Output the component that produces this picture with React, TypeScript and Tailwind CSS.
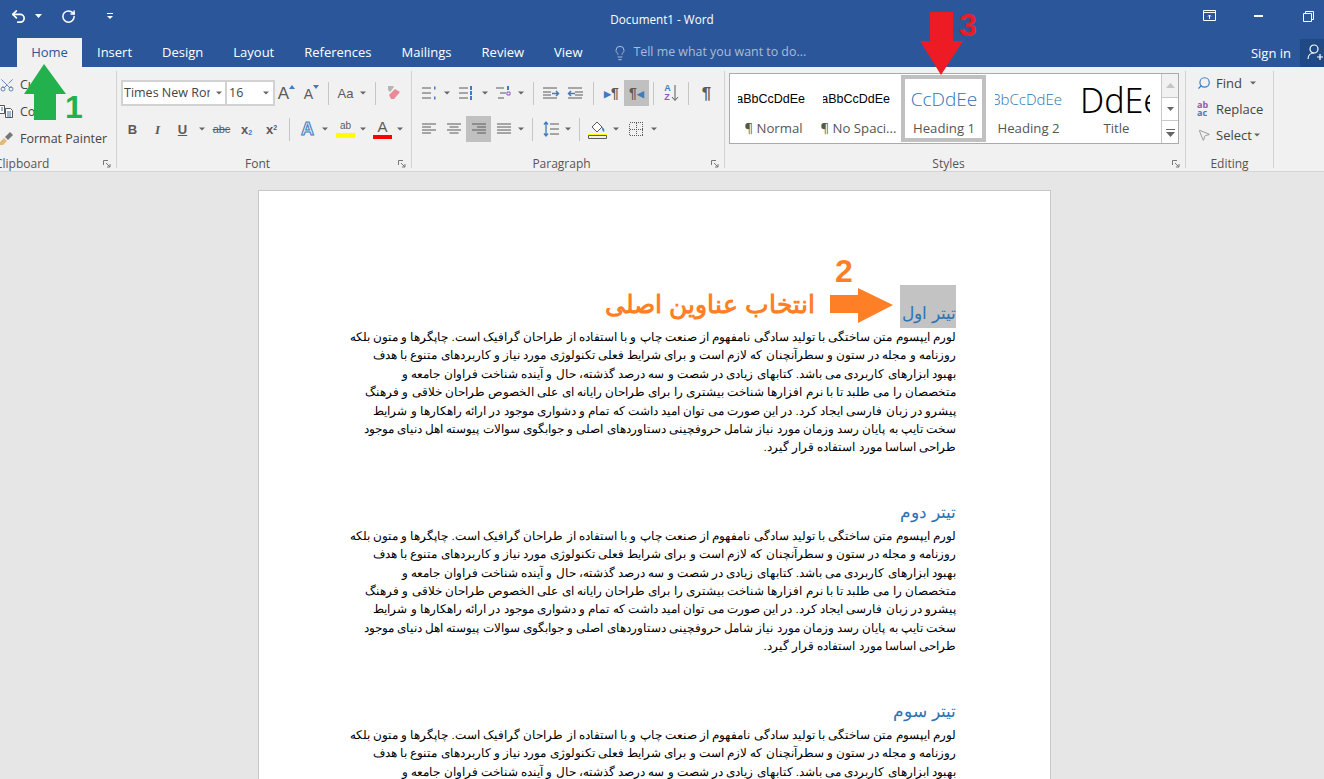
import type {ReactNode} from "react"
import {RotateCw, Undo2, Lightbulb, Search, MousePointer2, Scissors} from "lucide-react"

const ui = "font-['Open_Sans','Noto_Sans',sans-serif]"

const tabs = ["Insert", "Design", "Layout", "References", "Mailings", "Review", "View"]

const paragraph = [
    "لورم ایپسوم متن ساختگی با تولید سادگی نامفهوم از صنعت چاپ و با استفاده از طراحان گرافیک است. چاپگرها و متون بلکه",
    "روزنامه و مجله در ستون و سطرآنچنان که لازم است و برای شرایط فعلی تکنولوژی مورد نیاز و کاربردهای متنوع با هدف",
    "بهبود ابزارهای کاربردی می باشد. کتابهای زیادی در شصت و سه درصد گذشته، حال و آینده شناخت فراوان جامعه و",
    "متخصصان را می طلبد تا با نرم افزارها شناخت بیشتری را برای طراحان رایانه ای علی الخصوص طراحان خلاقی و فرهنگ",
    "پیشرو در زبان فارسی ایجاد کرد. در این صورت می توان امید داشت که تمام و دشواری موجود در ارائه راهکارها و شرایط",
    "سخت تایپ به پایان رسد وزمان مورد نیاز شامل حروفچینی دستاوردهای اصلی و جوابگوی سوالات پیوسته اهل دنیای موجود",
    "طراحی اساسا مورد استفاده قرار گیرد.",
]

const Chev = ({className = ""}: {className?: string}) => (
    <svg width="10" height="26" viewBox="0 0 10 26" className={`shrink-0 ${className}`}>
        <path d="M2 11.5h6l-3 3z" fill="#666"/>
    </svg>
)

const Sep = ({className = ""}: {className?: string}) => (
    <div className={`w-px h-[23px] my-auto bg-[#c6c6c6] shrink-0 ${className}`}/>
)

const Btn = ({children, active, className = ""}: {children: ReactNode; active?: boolean; className?: string}) => (
    <div className={`w-[25px] h-[26px] shrink-0 flex items-center justify-center ${active ? "bg-[#c0c0c0]" : ""} ${className}`}>
        {children}
    </div>
)

const Ico = ({children}: {children: ReactNode}) => (
    <svg width="18" height="18" viewBox="0 0 18 18" fill="none" stroke="#5a5a5a" strokeWidth="1">
        {children}
    </svg>
)

const Launcher = () => (
    <svg width="8" height="8" viewBox="0 0 8 8" className="shrink-0" fill="none" stroke="#777">
        <path d="M.5 5V.5H5"/>
        <path d="M3 3l4 4M7 4v3H4"/>
    </svg>
)

const GroupLabel = ({label}: {label: string}) => (
    <div className="mt-auto h-[17px] -mb-[4px] flex items-center pr-[5px]">
        <div className="w-[15px]"/>
        <div className="flex-1 text-center text-[12px] text-[#555] pr-[5px] -translate-x-[5px]">{label}</div>
        <Launcher/>
    </div>
)

const Group = ({children, className = ""}: {children: ReactNode; className?: string}) => (
    <div className={`shrink-0 h-[97px] mt-[4px] flex flex-col border-r border-[#d2d2d2] ${className}`}>{children}</div>
)

const Glyph = ({children, className = ""}: {children: ReactNode; className?: string}) => (
    <span className={`font-['Liberation_Sans',sans-serif] text-[#5a5a5a] leading-none ${className}`}>{children}</span>
)

const Style = ({preview, label, selected, className = ""}: {preview: ReactNode; label: string; selected?: boolean; className?: string}) => (
    <div className={`w-[85px] h-[67px] shrink-0 flex flex-col items-center overflow-hidden border-[4px] ${selected ? "border-[#c0c0c0]" : "border-transparent"} ${className}`}>
        <div className="h-[41px] w-full flex items-center justify-center overflow-hidden">{preview}</div>
        <div className="text-[13.2px] text-[#555] leading-[16px] whitespace-nowrap">{label}</div>
    </div>
)

const Body = () => (
    <div className="font-['Liberation_Sans',sans-serif] text-[11.7px] leading-[18.4px] text-black">
        {paragraph.map((line, i) => (
            <div key={i} className="whitespace-nowrap">{line}</div>
        ))}
    </div>
)

const Heading = ({children}: {children: string}) => (
    <div className="font-['Liberation_Sans',sans-serif] text-[17px] leading-[17px] pb-[6px] text-[#2e74b5]">{children}</div>
)

export default function App() {
    return (
        <div className={`relative w-[1324px] h-[779px] overflow-hidden bg-[#e6e6e6] ${ui}`}>
            {/* title bar */}
            <div className="h-[38px] pb-[6px] bg-[#2b579a] flex items-center text-white relative">
                <Undo2 size={17} strokeWidth={2.4} className="ml-[10px]"/>
                <svg width="8" height="6" viewBox="0 0 8 6" className="ml-[8px]"><path d="M0 1h7L3.5 5z" fill="#fff"/></svg>
                <RotateCw size={15} strokeWidth={2.4} className="ml-[18px]"/>
                <svg width="8" height="8" viewBox="0 0 8 8" className="ml-[30px]" stroke="#fff" fill="#fff">
                    <path d="M1 1.5h6" fill="none"/><path d="M1 4h6L4 7z" stroke="none"/>
                </svg>
                <div className="absolute left-0 right-0 top-[11px] text-center text-[11.7px] pointer-events-none">Document1 - Word</div>
                <svg width="14" height="12" viewBox="0 0 14 12" fill="none" stroke="#fff" className="ml-auto">
                    <path d="M.5.5h12v10H.5zM.5 2.5h12"/><path d="M6.5 9V5M5 6.5l1.5-1.5L8 6.5"/>
                </svg>
                <div className="w-[9px] h-[2px] bg-white ml-[37px]"/>
                <svg width="11" height="11" viewBox="0 0 11 11" fill="none" stroke="#fff" className="ml-[40px] mr-[10px]">
                    <path d="M.5 2.5h8v8h-8zM2.5 2.5v-2h8v8h-2"/>
                </svg>
            </div>

            {/* tabs */}
            <div className="h-[29px] bg-[#2b579a] flex items-stretch text-[13px] text-white">
                <div className="ml-[17px] w-[65px] bg-[#f1f1f1] text-[#2b579a] flex items-center justify-center">Home</div>
                <div className="flex items-center ml-[15px] gap-[30px]">
                    {tabs.map((t) => <span key={t}>{t}</span>)}
                </div>
                <div className="flex items-center ml-[30px] text-[#a9bcd8] text-[12.4px]">
                    <Lightbulb size={16} strokeWidth={1.5} className="mr-[5px]"/>
                    Tell me what you want to do...
                </div>
                <div className="ml-auto flex items-center">
                    <span className="mr-[9px] pt-[2px]">Sign in</span>
                    <div className="w-[24px] h-[28px] bg-[#1f4a85] flex items-center justify-start pl-[7px]">
                        <svg width="17" height="17" viewBox="0 0 17 17" fill="none" stroke="#fff" strokeWidth="1.2">
                            <circle cx="7" cy="5" r="4"/><path d="M1 15c0-4 3-6 6-6M10 13h6M13 10v6"/>
                        </svg>
                    </div>
                </div>
            </div>

            {/* ribbon */}
            <div className="h-[105px] bg-[#f1f1f1] border-b border-[#d4d4d4] flex items-start text-[#444]">
                <Group className="w-[117px]">
                    <div className="text-[12.5px] leading-[27px] whitespace-nowrap">
                        <div className="flex items-center -ml-[1px] h-[27px]">
                            <Scissors size={16} strokeWidth={1.2} className="text-[#3e6ea8] rotate-[-90deg] mr-[5px]"/>Cut
                        </div>
                        <div className="flex items-center -ml-[1px] h-[27px]">
                            <svg width="15" height="15" viewBox="0 0 15 15" fill="none" stroke="#555" className="mr-[6px]">
                                <path d="M.5 1.5h5v8h-5zM6.5 4.5h5l2 2v7h-7z" fill="#fff"/>
                                <path d="M2 4h2M2 6h2M8 8h4M8 10h4M8 12h4" stroke="#3e6ea8"/>
                            </svg>Copy
                        </div>
                        <div className="flex items-center -ml-[1px] h-[27px]">
                            <svg width="16" height="15" viewBox="0 0 16 15" className="mr-[5px]">
                                <path d="M0 12l5-5 3 3-4 4H1z" fill="#e3b97a"/>
                                <path d="M6 6l5-5 3 3-5 5z" fill="#777"/>
                            </svg>Format Painter
                        </div>
                    </div>
                    <div className="mt-auto h-[17px] -mb-[4px] flex items-center pr-[5px]">
                        <div className="flex-1 text-[12px] text-[#555] -ml-[5px]">Clipboard</div>
                        <Launcher/>
                    </div>
                </Group>

                <Group className="w-[295px]">
                    <div className="flex h-[26px] mt-[9px] pl-[4px]">
                        <div className="w-[106px] border-2 border-[#d2d2d2] bg-white flex items-center pl-[1px] text-[12.5px] overflow-hidden whitespace-nowrap">
                            <span className="w-[86px] overflow-hidden shrink-0">Times New Roman</span>
                            <Chev className="ml-[4px]"/>
                        </div>
                        <div className="w-[48px] border-2 border-l-0 border-[#d2d2d2] bg-white flex items-center pl-[2px] text-[12.5px]">
                            <span className="flex-1">16</span><Chev className="mr-[2px]"/>
                        </div>
                        <Btn className="-ml-[1px]">
                            <div className="flex items-start">
                                <Glyph className="text-[17px]">A</Glyph>
                                <svg width="6" height="4" viewBox="0 0 6 4"><path d="M0 4h6L3 0z" fill="#3e7cbf"/></svg>
                            </div>
                        </Btn>
                        <Btn>
                            <div className="flex items-start">
                                <Glyph className="text-[14px] mt-[2px]">A</Glyph>
                                <svg width="6" height="4" viewBox="0 0 6 4"><path d="M0 0h6L3 4z" fill="#3e7cbf"/></svg>
                            </div>
                        </Btn>
                        <Sep className="ml-[4px]"/>
                        <Btn className="ml-[4px]"><Glyph className="text-[13px]">Aa</Glyph></Btn>
                        <Chev/>
                        <Sep className="ml-[7px]"/>
                        <Btn className="ml-[5px]">
                            <svg width="16" height="16" viewBox="0 0 16 16">
                                <path d="M3 10l6-6 5 3-6 7-3 0z" fill="#ea8a96"/>
                                <path d="M2 1h5l1 1-4 5-2-2z" fill="#b5b5b5"/>
                            </svg>
                        </Btn>
                    </div>
                    <div className="flex h-[26px] mt-[10px] pl-[3px]">
                        <Btn><Glyph className="font-bold text-[13px]">B</Glyph></Btn>
                        <Btn><Glyph className="italic font-bold text-[13px] font-['Liberation_Serif',serif]">I</Glyph></Btn>
                        <Btn><Glyph className="underline font-bold text-[13px]">U</Glyph></Btn>
                        <Chev className="ml-[2px]"/>
                        <Btn className="ml-[2px]"><Glyph className="line-through text-[11px]">abc</Glyph></Btn>
                        <Btn><Glyph className="font-bold text-[13px]">x<sub className="text-[#3e7cbf] text-[7px]">2</sub></Glyph></Btn>
                        <Btn><Glyph className="font-bold text-[13px]">x<sup className="text-[7px]">2</sup></Glyph></Btn>
                        <Sep className="ml-[5px]"/>
                        <Btn className="ml-[5px]">
                            <span className="font-['Liberation_Sans',sans-serif] font-bold text-[18px] text-[#d9e6f4] [-webkit-text-stroke:1px_#3e7cbf]">A</span>
                        </Btn>
                        <Chev/>
                        <Btn className="ml-[3px]">
                            <div className="flex flex-col items-center">
                                <Glyph className="text-[10px]">ab</Glyph>
                                <div className="w-[19px] h-[5px] bg-[#ffff00] mt-[2px]"/>
                            </div>
                        </Btn>
                        <Chev/>
                        <Btn className="ml-[2px]">
                            <div className="flex flex-col items-center">
                                <Glyph className="text-[15px]">A</Glyph>
                                <div className="w-[19px] h-[4px] bg-[#ff0000] mt-[1px]"/>
                            </div>
                        </Btn>
                        <Chev/>
                    </div>
                    <GroupLabel label="Font"/>
                </Group>

                <Group className="w-[313px]">
                    <div className="flex h-[26px] mt-[9px] pl-[4px]">
                        <Btn><Ico><path d="M2 4h9M2 9h9M2 14h9"/><path d="M14 4h1.5M14 14h1.5" stroke="#3e7cbf" strokeWidth="3"/></Ico></Btn>
                        <Chev className="ml-[1px]"/>
                        <Btn className="ml-[1px]"><Ico><path d="M2 4h9M2 9h9M2 14h9"/><path d="M14 2v4M14 7v4M14 12v4" stroke="#3e7cbf" strokeWidth="2"/></Ico></Btn>
                        <Chev className="ml-[2px]"/>
                        <Btn className="ml-[1px]"><Ico><path d="M1 4h8M5 9h6M3 14h6"/><path d="M13 2v4" stroke="#3e7cbf" strokeWidth="2"/><path d="M12 8h3v3h-3z" stroke="#8e5bb5"/></Ico></Btn>
                        <Chev/>
                        <Sep className="ml-[7px]"/>
                        <Btn className="ml-[4px]"><Ico><path d="M1 4h14M1 8h8M1 11h8M1 14h14"/><path d="M10 9.5h6M14 7l2.5 2.5L14 12" stroke="#3e7cbf" strokeWidth="1.5"/></Ico></Btn>
                        <Btn><Ico><path d="M1 4h14M8 8h8M8 11h8M1 14h14"/><path d="M2 9.5h6M4 7L1.5 9.5 4 12" stroke="#3e7cbf" strokeWidth="1.5"/></Ico></Btn>
                        <Sep className="ml-[5px]"/>
                        <Btn className="ml-[5px]"><span className="flex items-center text-[14px] font-bold leading-none"><span className="text-[#3e7cbf] text-[9px]">▶</span><Glyph>¶</Glyph></span></Btn>
                        <Btn active><span className="flex items-center text-[14px] font-bold leading-none"><Glyph>¶</Glyph><span className="text-[#3e7cbf] text-[9px]">◀</span></span></Btn>
                        <Sep className="ml-[4px]"/>
                        <Btn className="ml-[5px]">
                            <div className="flex items-center">
                                <div className="flex flex-col text-[9px] font-bold leading-[9px] font-['Liberation_Sans',sans-serif]">
                                    <span className="text-[#3e7cbf]">A</span><span className="text-[#8e5bb5]">Z</span>
                                </div>
                                <svg width="8" height="17" viewBox="0 0 8 17" fill="none" stroke="#5a5a5a"><path d="M4 0v15M1 12l3 3.5L7 12"/></svg>
                            </div>
                        </Btn>
                        <Sep className="ml-[4px]"/>
                        <Btn className="ml-[5px]"><Glyph className="text-[17px] font-bold">¶</Glyph></Btn>
                    </div>
                    <div className="flex h-[26px] mt-[10px] pl-[4px]">
                        <Btn><Ico><path d="M2 4h14M2 7h9M2 10h14M2 13h9"/></Ico></Btn>
                        <Btn><Ico><path d="M2 4h14M4.5 7h9M2 10h14M4.5 13h9"/></Ico></Btn>
                        <Btn active><Ico><path d="M2 4h14M7 7h9M2 10h14M7 13h9"/></Ico></Btn>
                        <Btn><Ico><path d="M2 4h14M2 7h14M2 10h14M2 13h14"/></Ico></Btn>
                        <Chev/>
                        <Sep className="ml-[6px]"/>
                        <Btn className="ml-[5px]"><Ico><path d="M8 4h9M8 9h9M8 14h9"/><path d="M4 2v14M2 4.5L4 2l2 2.5M2 13.5L4 16l2-2.5" stroke="#3e7cbf" strokeWidth="1.3"/></Ico></Btn>
                        <Chev/>
                        <Sep className="ml-[6px]"/>
                        <Btn className="ml-[5px]">
                            <svg width="19" height="20" viewBox="0 0 19 20" fill="none" stroke="#5a5a5a">
                                <path d="M4 8l5-5 5 5-5 5z" fill="#fff"/><path d="M14 8c2 1 3 3 2 5-2-1-2-3-2-5z" fill="#3e7cbf" stroke="none"/>
                                <path d="M0 15h19v1.5H0z" fill="#ffff00" stroke="none"/><path d="M.5 16.5h18v3H.5z"/>
                            </svg>
                        </Btn>
                        <Chev className="ml-[1px]"/>
                        <Btn className="ml-[2px]">
                            <svg width="14" height="14" viewBox="0 0 14 14" fill="none" stroke="#5a5a5a" strokeDasharray="1 1" shapeRendering="crispEdges">
                                <path d="M.5.5h13v13H.5zM7.5 .5v13M.5 7.5h13"/>
                            </svg>
                        </Btn>
                        <Chev className="ml-[1px]"/>
                    </div>
                    <GroupLabel label="Paragraph"/>
                </Group>

                <Group className="w-[461px]">
                    <div className="flex mt-[2px] ml-[4px]">
                        <div className="w-[450px] h-[71px] border border-[#ababab] bg-white flex items-center">
                            <div className="flex-1 flex pl-px">
                                <Style label="¶ Normal" preview={<span className="font-['Liberation_Sans',sans-serif] text-[12.5px] text-black w-[67px] mr-[4px] overflow-hidden flex justify-end"><span>AaBbCcDdEe</span></span>}/>
                                <Style label="¶ No Spaci..." preview={<span className="font-['Liberation_Sans',sans-serif] text-[12.5px] text-black w-[67px] mr-[4px] overflow-hidden flex justify-end"><span>AaBbCcDdEe</span></span>}/>
                                <Style selected label="Heading 1" className="pl-px" preview={<span className="text-[19px] font-light text-[#2e74b5] whitespace-nowrap">CcDdEe</span>}/>
                                <Style label="Heading 2" preview={<span className="text-[15px] text-[#2e74b5] w-[67px] overflow-hidden flex justify-end font-light whitespace-nowrap"><span>AaBbCcDdEe</span></span>}/>
                                <Style label="Title" className="ml-[3px]" preview={<span className="font-['Noto_Sans',sans-serif] text-[34px] font-light text-black leading-[36px] w-[70px] -ml-[3px] overflow-hidden whitespace-nowrap">DdEe</span>}/>
                            </div>
                            <div className="w-[17px] self-stretch flex flex-col border-l border-[#c8c8c8]">
                                <div className="h-[24px] bg-[#f1f1f1] border-b border-[#c8c8c8] flex items-center justify-center">
                                    <svg width="9" height="5" viewBox="0 0 9 5"><path d="M0 5h9L4.5 0z" fill="#c4c4c4"/></svg>
                                </div>
                                <div className="h-[23px] border-b border-[#c8c8c8] flex items-center justify-center">
                                    <svg width="7" height="4" viewBox="0 0 7 4"><path d="M0 0h7L3.5 4z" fill="#666"/></svg>
                                </div>
                                <div className="flex-1 flex items-center justify-center">
                                    <svg width="9" height="9" viewBox="0 0 9 9"><path d="M0 1h9v1H0zM0 4h9L4.5 9z" fill="#666"/></svg>
                                </div>
                            </div>
                        </div>
                    </div>
                    <GroupLabel label="Styles"/>
                </Group>

                <Group className="w-[88px]">
                    <div className="text-[13px] leading-[26px] pl-[11px] -mt-[1px] whitespace-nowrap">
                        <div className="flex items-center h-[26px]">
                            <Search size={14} strokeWidth={2} className="text-[#3e7cbf] -scale-x-100 mr-[5px]"/>Find<Chev className="ml-[6px]"/>
                        </div>
                        <div className="flex items-center h-[26px]">
                            <span className="text-[9px] leading-[8px] font-bold mr-[5px] w-[14px]"><span className="text-[#8e5bb5]">ab</span><br/><span className="text-[#3e7cbf]">ac</span></span>Replace
                        </div>
                        <div className="flex items-center h-[26px]">
                            <MousePointer2 size={14} strokeWidth={1.2} className="text-[#777] mr-[5px]"/>Select<Chev/>
                        </div>
                    </div>
                    <div className="mt-auto h-[17px] -mb-[4px] text-center text-[12px] text-[#555]">Editing</div>
                </Group>
            </div>

            {/* document */}
            <div className="pt-[18px] pl-[258px]">
                <div dir="rtl" className="w-[793px] h-[640px] bg-white border border-[#c8c8c8] pr-[94px] pt-[94px]">
                    <div className="flex">
                        <div className="w-[56px] h-[43px] bg-[#c3c3c3] flex items-end whitespace-nowrap">
                            <Heading>تیتر اول</Heading>
                        </div>
                    </div>
                    <Body/>
                    <div className="mt-[47px]"><Heading>تیتر دوم</Heading></div>
                    <Body/>
                    <div className="mt-[47px]"><Heading>تیتر سوم</Heading></div>
                    <Body/>
                </div>
            </div>

            {/* annotations */}
            <svg width="44" height="58" viewBox="0 0 44 58" className="absolute left-[23px] top-[63px]">
                <path d="M21 1L43 31H33V57H11V31H1z" fill="#22b14c"/>
            </svg>
            <span className="absolute left-[65px] top-[87px] font-['Liberation_Sans',sans-serif] font-bold text-[32px] leading-[40px] text-[#22b14c]">1</span>

            <svg width="44" height="64" viewBox="0 0 44 64" className="absolute left-[920px] top-[12px]">
                <path d="M10 0H33V29H43L21 63 0 29H10z" fill="#ed1c24"/>
            </svg>
            <span className="absolute left-[959px] top-[5px] font-['Liberation_Sans',sans-serif] font-bold text-[32px] leading-[40px] text-[#ed1c24]">3</span>

            <svg width="64" height="36" viewBox="0 0 64 36" className="absolute left-[830px] top-[288px]">
                <path d="M0 7H28V0L63 17 28 35V25H0z" fill="#ff7f27"/>
            </svg>
            <span className="absolute left-[835px] top-[251px] font-['Liberation_Sans',sans-serif] font-bold text-[32px] leading-[40px] text-[#ff7f27]">2</span>
            <span dir="rtl" className="absolute left-[605px] top-[286px] font-['Liberation_Sans',sans-serif] font-bold text-[25px] leading-[36px] text-[#ff7f27] whitespace-nowrap">انتخاب عناوین اصلی</span>
        </div>
    )
}
